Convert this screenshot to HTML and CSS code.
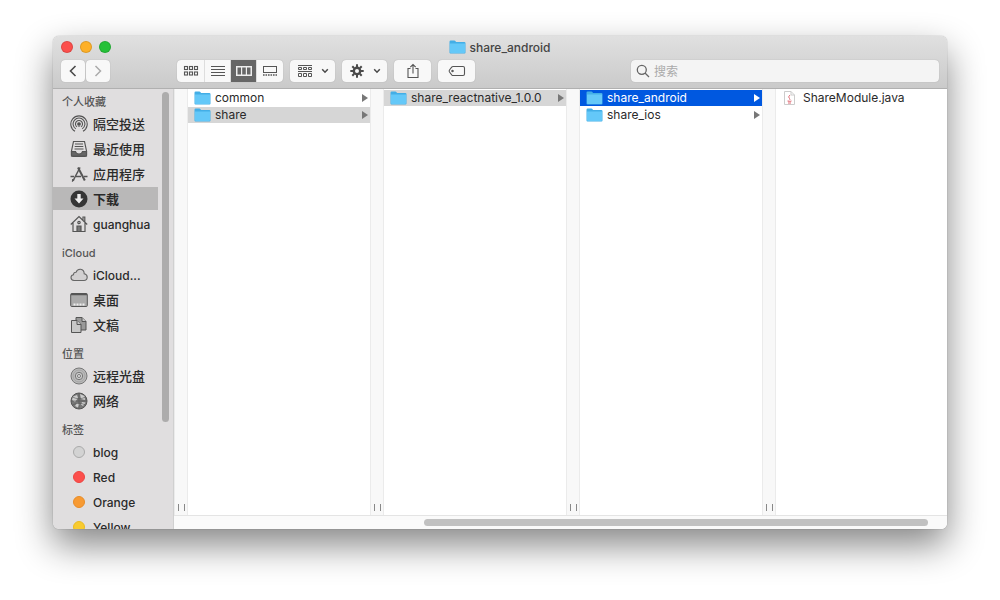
FILE: index.html
```html
<!DOCTYPE html>
<html lang="zh-CN">
<head>
  <meta charset="UTF-8">
  <title>share_android</title>
  <meta name="viewport" content="width=device-width, initial-scale=1.0">
  <link rel="stylesheet" href="styles.css">
</head>
<body>
  <svg class="symbols" aria-hidden="true">
    <symbol id="folder" viewBox="0 0 17 14">
      <path d="M.5 1.7Q.5 .5 1.700 .5H5.400Q6 .5 6.400 1.100L7 2H15.300Q16.500 2 16.500 3.200V12.500Q16.500 13.500 15.500 13.500H1.500Q.5 13.500 .5 12.500Z" fill="#43aee6"/>
      <path d="M1 3.600H16V12Q16 13 15 13H2Q1 13 1 12Z" fill="#64c8f8"/>
    </symbol>
    <symbol id="chevron" viewBox="0 0 8 6"><path d="M1.200 1.200L4 4.200L6.800 1.200" fill="none" stroke="#4a4a4a" stroke-width="1.500"/></symbol>
  </svg>

  <div class="window">
    <header class="toolbar">
      <div class="title-row">
        <div class="lights">
          <button class="light close" aria-label="关闭"></button>
          <button class="light minimize" aria-label="最小化"></button>
          <button class="light zoom" aria-label="缩放"></button>
        </div>
        <h1><svg class="folder"><use href="#folder"/></svg>share_android</h1>
      </div>
      <div class="tool-row">
        <div class="nav-buttons">
          <button class="tool" aria-label="返回"><svg width="10" height="14" viewBox="0 0 10 14"><path d="M7.500 2L2.500 7L7.500 12" fill="none" stroke="#4a4a4a" stroke-width="1.600"/></svg></button>
          <button class="tool" aria-label="前进"><svg width="10" height="14" viewBox="0 0 10 14"><path d="M2.500 2L7.500 7L2.500 12" fill="none" stroke="#aaa" stroke-width="1.500"/></svg></button>
        </div>
        <div class="segments">
          <button class="segment" aria-label="图标">
            <svg width="16" height="12" viewBox="0 0 16 12" fill="none" stroke="#555" stroke-width="1.100"><rect x="1.500" y="1.500" width="3" height="3"/><rect x="6.500" y="1.500" width="3" height="3"/><rect x="11.500" y="1.500" width="3" height="3"/><rect x="1.500" y="7" width="3" height="3"/><rect x="6.500" y="7" width="3" height="3"/><rect x="11.500" y="7" width="3" height="3"/></svg>
          </button>
          <button class="segment" aria-label="列表">
            <svg width="14" height="12" viewBox="0 0 14 12" stroke="#555"><path d="M0 1.500H14M0 4.500H14M0 7.500H14M0 10.500H14"/></svg>
          </button>
          <button class="segment active" aria-label="分栏">
            <svg width="16" height="12" viewBox="0 0 16 12"><path d="M0 1H16V11H0Z" fill="#eee"/><path d="M1.500 2.500H5V9.500H1.500ZM6.200 2.500H9.800V9.500H6.200ZM11 2.500H14.500V9.500H11Z" fill="#666"/></svg>
          </button>
          <button class="segment" aria-label="画廊">
            <svg width="16" height="12" viewBox="0 0 16 12" fill="none" stroke="#555"><rect x="1.500" y="1.500" width="13" height="6"/><path d="M1 10H15" stroke-width="1.500" stroke-dasharray="1.600 .9"/></svg>
          </button>
        </div>
        <button class="tool menu" aria-label="分组">
          <svg width="16" height="14" viewBox="0 0 16 14" fill="none" stroke="#555"><path d="M1 1.500H15M1 7.500H15"/><path d="M1.500 3.500H4.500V5.500H1.500ZM6.500 3.500H9.500V5.500H6.500ZM11.500 3.500H14.500V5.500H11.500ZM1.500 9.500H4.500V12.500H1.500ZM6.500 9.500H9.500V12.500H6.500ZM11.500 9.500H14.500V12.500H11.500Z"/></svg>
          <svg width="8" height="6"><use href="#chevron"/></svg>
        </button>
        <button class="tool menu" aria-label="操作">
          <svg width="16" height="16" viewBox="0 0 16 16" fill="none" stroke="#4a4a4a"><circle cx="8" cy="8" r="3.200" stroke-width="2.400"/><path d="M8 1.300V4M8 12V14.700M1.300 8H4M12 8H14.700M3.300 3.300L5.200 5.200M10.800 10.800L12.700 12.700M12.700 3.300L10.800 5.200M5.200 10.800L3.300 12.700" stroke-width="2"/></svg>
          <svg width="8" height="6"><use href="#chevron"/></svg>
        </button>
        <button class="tool wide" aria-label="共享">
          <svg width="14" height="16" viewBox="0 0 14 16" fill="none" stroke="#555" stroke-width="1.100"><path d="M4.500 5.500H2V14.500H12V5.500H9.500M7 10.500V1.500M4.300 4.200L7 1.500L9.700 4.200"/></svg>
        </button>
        <button class="tool wide" aria-label="标签">
          <svg width="18" height="12" viewBox="0 0 18 12" fill="none" stroke="#555" stroke-width="1.100"><path d="M5 1.500H15Q16.500 1.500 16.500 3V9Q16.500 10.500 15 10.500H5Q4.300 10.500 3.700 9.800L1.500 7Q.8 6 1.500 5L3.700 2.200Q4.300 1.500 5 1.500Z"/><circle cx="4.500" cy="6" r=".7"/></svg>
        </button>
        <label class="search">
          <svg width="14" height="14" viewBox="0 0 14 14" fill="none" stroke="#666" stroke-width="1.300"><circle cx="5.800" cy="5.800" r="4.500"/><path d="M9 9L13 13"/></svg>
          <input type="text" placeholder="搜索" aria-label="搜索">
        </label>
      </div>
    </header>

    <div class="content">
      <aside class="sidebar">
        <nav class="places">
          <h2>个人收藏</h2>
          <ul>
            <li><a href="#">
              <svg viewBox="0 0 18 18" fill="none" stroke="#555" stroke-width="1.100"><path d="M5 16.200A8.200 8.200 0 1 1 13 16.200M5.800 13.900A5.900 5.900 0 1 1 12.200 13.900M7 11.900A3.500 3.500 0 1 1 11 11.900"/><circle cx="9" cy="9" r="1.300" fill="#555"/><path d="M9 11V12"/></svg>
              隔空投送</a></li>
            <li><a href="#">
              <svg viewBox="0 0 18 18" fill="none" stroke="#555" stroke-width="1.200"><path d="M3.500 1.500H14.500L16.500 11V15Q16.500 16.500 15 16.500H3Q1.500 16.500 1.500 15V11Z"/><path d="M1.500 11.500H5.500Q6 14 9 14T12.500 11.500H16.500V16H1.500Z" fill="#666"/><path d="M5 4H13M4.700 6.500H13.300M4.500 9H13.500"/></svg>
              最近使用</a></li>
            <li><a href="#">
              <svg viewBox="0 0 18 18" fill="none" stroke="#555"><path d="M8 2.500L14.800 15.500" stroke-width="2"/><path d="M10 2.500L3.200 15.500" stroke-width="1.500"/><path d="M.5 11.500H4M6 11.500H11M14 11.500H17.500" stroke-width="1.600"/><path d="M2.700 14L2.300 16.500L4.300 15" stroke-width="1"/></svg>
              应用程序</a></li>
            <li class="selected"><a href="#">
              <svg viewBox="0 0 18 18"><circle cx="9" cy="9" r="8.500" fill="#353535"/><path d="M7.300 4H10.700V8.500H13.500L9 13.500L4.500 8.500H7.300Z" fill="#eee"/></svg>
              下载</a></li>
            <li class="latin"><a href="#">
              <svg viewBox="0 0 18 18" fill="none" stroke="#555" stroke-width="1.200"><path d="M.8 9.500L9 1.500L17.200 9.500M3 8V16.500H15V8M13 5V2H14.800V7"/><path d="M7 16.500V11H11V16.500Z" fill="#777"/><circle cx="9" cy="7.500" r="1.200"/></svg>
              guanghua</a></li>
          </ul>
          <h2>iCloud</h2>
          <ul>
            <li class="latin"><a href="#">
              <svg viewBox="0 0 18 18" fill="#d2d0d1" stroke="#666" stroke-width="1.100"><path d="M4 14.500Q1 14.300 1 11.500Q1 9 3.500 8.700Q3.500 6.200 6 6.300Q7 3 10.500 3.200Q14.200 3.700 14.200 7.800Q17.300 8.500 17.200 11.300Q17 14.500 14 14.500Z"/></svg>
              iCloud...</a></li>
            <li><a href="#">
              <svg viewBox="0 0 18 18" stroke="#555"><rect x=".7" y="2.500" width="16.600" height="13" rx="1" fill="#aaa"/><path d="M1 3.500H17" stroke-width="1.500"/><path d="M3.500 13.500H14.500" stroke="#eee" stroke-width="2" stroke-dasharray="2 1"/></svg>
              桌面</a></li>
            <li><a href="#">
              <svg viewBox="0 0 18 18" fill="#c8c8c8" stroke="#555"><path d="M6 1.500H12L16 5.500V14H6Z" fill="#999"/><path d="M12 1.500V5.500H16"/><path d="M1.500 4.500H7L11 8.500V16.500H1.500Z"/><path d="M7 4.500V8.500H11"/></svg>
              文稿</a></li>
          </ul>
          <h2>位置</h2>
          <ul>
            <li><a href="#">
              <svg viewBox="0 0 18 18" fill="none" stroke="#777"><circle cx="9" cy="9" r="8" fill="#bbb"/><circle cx="9" cy="9" r="6" stroke="#a5a5a5"/><circle cx="9" cy="9" r="3.700" fill="#ccc"/><circle cx="9" cy="9" r="1.500" fill="#eee"/></svg>
              远程光盘</a></li>
            <li><a href="#">
              <svg viewBox="0 0 18 18" fill="none" stroke="#555"><circle cx="9" cy="9" r="8" fill="#777"/><path d="M3 4.500L7 3L8 6L5 10L2 8ZM10 2L14.500 4L15 8L11 7ZM7 11L9.500 12L8 15.500L5 14ZM12 10L15.500 10.500L13 14L11 12.500Z" fill="#ccc" stroke="none"/><path d="M9 1V17M1 9H17M2.500 5Q9 8.500 15.500 5M2.500 13Q9 9.500 15.500 13" stroke-width=".6"/></svg>
              网络</a></li>
          </ul>
          <h2>标签</h2>
          <ul>
            <li class="latin"><a href="#"><span class="tag"></span>blog</a></li>
            <li class="latin"><a href="#"><span class="tag red"></span>Red</a></li>
            <li class="latin"><a href="#"><span class="tag orange"></span>Orange</a></li>
            <li class="latin"><a href="#"><span class="tag yellow"></span>Yellow</a></li>
          </ul>
        </nav>
        <div class="side-scroll"><div class="thumb"></div></div>
      </aside>

      <main class="browser">
        <div class="columns">
          <div class="gutter"></div>
          <ul class="column">
            <li><a href="#"><svg class="folder"><use href="#folder"/></svg><span>common</span><i class="arrow"></i></a></li>
            <li class="open"><a href="#"><svg class="folder"><use href="#folder"/></svg><span>share</span><i class="arrow"></i></a></li>
          </ul>
          <div class="gutter"></div>
          <ul class="column">
            <li class="open"><a href="#"><svg class="folder"><use href="#folder"/></svg><span>share_reactnative_1.0.0</span><i class="arrow"></i></a></li>
          </ul>
          <div class="gutter"></div>
          <ul class="column">
            <li class="current"><a href="#"><svg class="folder"><use href="#folder"/></svg><span>share_android</span><i class="arrow"></i></a></li>
            <li><a href="#"><svg class="folder"><use href="#folder"/></svg><span>share_ios</span><i class="arrow"></i></a></li>
          </ul>
          <div class="gutter"></div>
          <ul class="column last">
            <li><a href="#">
              <svg class="file" viewBox="0 0 17 16" fill="none"><path d="M2.500 1.500H9L12.500 5V14.500H2.500Z" fill="#fff" stroke="#ccc"/><path d="M9 1.500V5H12.500" stroke="#ccc"/><path d="M8 5Q5.500 7 7.500 8.500Q8.500 9.500 7 10.500M5.500 11Q7.500 12 9.500 11M6 13H9" stroke="#e06a75"/></svg>
              <span>ShareModule.java</span></a></li>
          </ul>
        </div>
        <div class="bottom-scroll"><div class="thumb"></div></div>
      </main>
    </div>
  </div>
</body>
</html>
```
FILE: styles.css
```css
* {
  box-sizing: border-box;
}

body {
  margin: 0;
  padding: 36px 53px 71px;
  height: 100vh;
  background: #fff;
  color: #2a2a2a;
  font-family: Inter, "Noto Sans CJK SC", sans-serif;
  font-size: 12px;
  overflow: hidden;
}

h1, h2, ul {
  margin: 0;
  padding: 0;
}

ul {
  list-style: none;
}

a {
  color: inherit;
  text-decoration: none;
}

button {
  padding: 0;
  border: none;
}

.symbols {
  position: absolute;
  width: 0;
  height: 0;
}

.window {
  height: 100%;
  display: flex;
  flex-direction: column;
  border-radius: 6px;
  overflow: hidden;
  box-shadow: 0 0 1px rgba(0, 0, 0, 0.5), 0 16px 36px rgba(0, 0, 0, 0.48);
}

/* toolbar */
.toolbar {
  padding: 0 8px 6px;
  background: linear-gradient(#e0e0e0, #cacaca);
  border-bottom: 1px solid #b0b0b0;
}

.title-row {
  display: grid;
  grid-template-columns: 1fr auto 1fr;
  align-items: center;
  height: 24px;
  padding-bottom: 2px;
}

.title-row h1 {
  display: flex;
  align-items: center;
  gap: 3px;
  font-size: 12px;
  font-weight: 500;
  color: #444;
}

.lights {
  display: flex;
  gap: 7px;
}

.light {
  width: 12px;
  height: 12px;
  border-radius: 50%;
  border: 1px solid rgba(0, 0, 0, 0.12);
}

.close { background: #fc4f4c; }
.minimize { background: #fdb028; }
.zoom { background: #25c138; }

.tool-row {
  display: flex;
  align-items: center;
  gap: 7px;
  height: 22px;
}

.nav-buttons {
  display: flex;
  gap: 1px;
  margin-right: 60px;
}

.tool {
  display: flex;
  align-items: center;
  justify-content: center;
  width: 24px;
  height: 22px;
  border-radius: 4px;
  background: #f8f8f8;
  box-shadow: 0 0 1px #999;
}

.tool.menu {
  width: 45px;
  gap: 8px;
}

.tool.wide {
  width: 37px;
}

.segments {
  display: flex;
  height: 22px;
  border-radius: 4px;
  background: #f8f8f8;
  box-shadow: 0 0 1px #999;
  overflow: hidden;
}

.segment {
  display: flex;
  align-items: center;
  justify-content: center;
  width: 26px;
  background: none;
  border-right: 1px solid #ddd;
}

.segment:first-child {
  width: 28px;
}

.segment:last-child {
  border-right: none;
}

.segment.active {
  background: #666;
}

.search {
  flex: 1;
  display: flex;
  align-items: center;
  gap: 4px;
  height: 22px;
  margin-left: 149px;
  padding: 0 5px;
  border-radius: 4px;
  background: #f4f4f4;
  box-shadow: 0 0 1px #999;
}

.search input {
  flex: 1;
  min-width: 0;
  padding: 0;
  border: none;
  outline: none;
  background: none;
  font: inherit;
}

.search input::placeholder {
  color: #aaa;
}

/* sidebar */
.content {
  flex: 1;
  min-height: 0;
  display: flex;
}

.sidebar {
  display: flex;
  width: 121px;
  background: #e0dedf;
  border-right: 1px solid #d0d0d0;
  overflow: hidden;
}

.places {
  width: 105px;
}

.places h2 {
  padding: 8px 9px 2px;
  font-size: 11px;
  line-height: 16px;
  font-weight: 500;
  color: #555;
}

.places h2:first-child {
  padding-top: 5px;
}

.places li {
  height: 24px;
  margin-bottom: 1px;
}

.places li a {
  display: flex;
  align-items: center;
  gap: 5px;
  height: 23px;
  padding-left: 17px;
  font-size: 13px;
  font-weight: 500;
  white-space: nowrap;
}

.places .latin a {
  height: 24px;
  font-size: 12px;
}

.places svg {
  flex: none;
  width: 18px;
  height: 18px;
}

.places .selected a {
  background: #b9b8b8;
  font-weight: 700;
}

.tag {
  width: 12px;
  height: 12px;
  margin: 0 3px;
  border: 1px solid #aaa;
  border-radius: 50%;
  background: #d3d3d3;
}

.tag.red { background: #fc4f4c; border-color: #ec4542; }
.tag.orange { background: #f79a33; border-color: #e88c28; }
.tag.yellow { background: #f8cb30; border-color: #eabb22; }

.side-scroll {
  flex: 1;
  padding: 3px 4px;
}

.thumb {
  border-radius: 4px;
  background: #c1c1c1;
}

.side-scroll .thumb {
  height: 76%;
  background: #adacac;
}

/* column browser */
.browser {
  flex: 1;
  min-width: 0;
  display: flex;
  flex-direction: column;
  background: #fff;
}

.columns {
  flex: 1;
  display: flex;
}

.gutter {
  display: flex;
  align-items: flex-end;
  justify-content: center;
  width: 14px;
  padding-bottom: 4px;
  background: #f8f8f8;
  border-left: 1px solid #ebebeb;
  border-right: 1px solid #ebebeb;
}

/* drag grip */
.gutter::after {
  content: "";
  width: 5px;
  height: 7px;
  border-left: 1px solid #888;
  border-right: 1px solid #888;
}

.column {
  width: 182px;
  padding-top: 1px;
}

.column.last {
  flex: 1;
}

.column li {
  margin-bottom: 1px;
}

.column a {
  display: flex;
  align-items: center;
  gap: 4px;
  height: 16px;
  padding: 0 2px 0 6px;
}

.column span {
  flex: 1;
  line-height: 14px;
  padding-bottom: 1px;
  white-space: nowrap;
}

.folder {
  flex: none;
  width: 17px;
  height: 14px;
}

.file {
  flex: none;
  width: 17px;
  height: 16px;
}

.arrow {
  border-left: 6px solid #777;
  border-top: 4px solid transparent;
  border-bottom: 4px solid transparent;
}

.open {
  background: #d6d6d6;
}

.current {
  background: #0058e0;
  color: #fff;
}

.current .arrow {
  border-left-color: #fff;
}

.bottom-scroll {
  height: 14px;
  padding: 3px 19px 3px 250px;
  background: #fafafa;
  border-top: 1px solid #e4e4e4;
}

.bottom-scroll .thumb {
  height: 7px;
}
```
